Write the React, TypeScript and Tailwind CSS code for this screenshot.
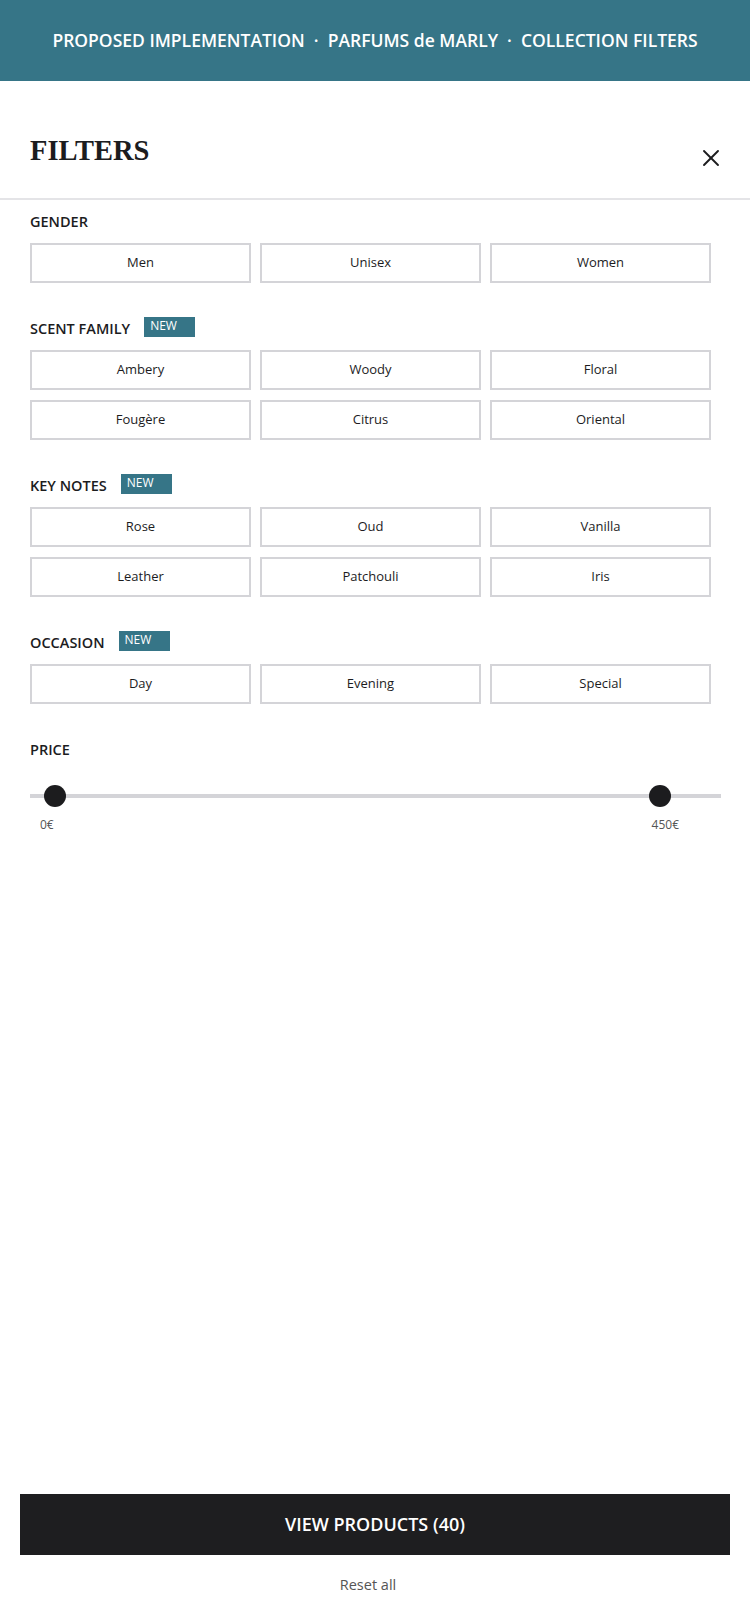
import { X } from "lucide-react";

// option groups shown in the filter drawer
const groups: { title: string; isNew?: boolean; options: string[] }[] = [
  { title: "GENDER", options: ["Men", "Unisex", "Women"] },
  {
    title: "SCENT FAMILY",
    isNew: true,
    options: ["Ambery", "Woody", "Floral", "Fougère", "Citrus", "Oriental"],
  },
  {
    title: "KEY NOTES",
    isNew: true,
    options: ["Rose", "Oud", "Vanilla", "Leather", "Patchouli", "Iris"],
  },
  { title: "OCCASION", isNew: true, options: ["Day", "Evening", "Special"] },
];

const sans = "font-['Open_Sans','Noto_Sans',sans-serif]";

const SectionTitle = ({ title, isNew }: { title: string; isNew?: boolean }) => (
  <div className="flex h-[20px] items-center">
    <h3 className="text-[14.5px] font-semibold text-[#1c1c1e]">{title}</h3>
    {isNew && (
      <span className="ml-[14px] -mt-[4px] h-[20px] w-[51px] bg-[#367587] pl-[6px] text-[12px] leading-[18px] text-white">
        NEW
      </span>
    )}
  </div>
);

const FilterGroup = ({ title, isNew, options }: (typeof groups)[number]) => (
  <div className="mb-[36px]">
    <SectionTitle title={title} isNew={isNew} />
    <div className="mt-[11px] grid w-[681px] grid-cols-3 gap-x-[9px] gap-y-[10px]">
      {options.map((option) => (
        <button
          key={option}
          className="flex h-[40px] items-center justify-center border-2 border-[#d4d4d8] bg-white text-[13px] text-[#1c1c1e]"
        >
          {option}
        </button>
      ))}
    </div>
  </div>
);

export default function App() {
  return (
    <div className={`flex h-[1624px] w-[750px] flex-col bg-white ${sans}`}>
      <header className="flex h-[81px] items-center justify-center bg-[#367587] text-[17.5px] font-semibold text-white">
        PROPOSED IMPLEMENTATION &nbsp;·&nbsp; PARFUMS de MARLY &nbsp;·&nbsp; COLLECTION FILTERS
      </header>

      <div className="flex h-[119px] items-center justify-between border-b-2 border-[#e4e4e7] pr-[25px] pl-[30px]">
        <h2 className="mt-[24px] font-['Liberation_Serif',serif] text-[28.5px] font-bold text-[#1c1c1e]">
          FILTERS
        </h2>
        <X className="mt-[36px] size-[28px] text-[#1c1c1e]" strokeWidth={1.6} />
      </div>

      <div className="pt-[12px] pl-[30px]">
        {groups.map((group) => (
          <FilterGroup key={group.title} {...group} />
        ))}

        <SectionTitle title="PRICE" />
        <div className="relative mt-[34px] mr-[29px] h-[4px] bg-[#d4d4d8]">
          <span className="absolute top-1/2 left-[14px] size-[22px] -translate-y-1/2 rounded-full bg-[#1c1c1e]" />
          <span className="absolute top-1/2 left-[619px] size-[22px] -translate-y-1/2 rounded-full bg-[#1c1c1e]" />
        </div>
        <div className="mt-[18px] flex justify-between pr-[71px] pl-[10px] text-[12px] text-[#555]">
          <span>0€</span>
          <span>450€</span>
        </div>
      </div>

      <div className="mt-auto px-[20px] pb-[28px]">
        <button className="flex h-[61px] w-full items-center justify-center bg-[#1e1e20] text-[18px] font-semibold text-white">
          VIEW PRODUCTS (40)
        </button>
        <p className="mt-[19px] pr-[14px] text-center text-[14.5px] text-[#555]">Reset all</p>
      </div>
    </div>
  );
}
